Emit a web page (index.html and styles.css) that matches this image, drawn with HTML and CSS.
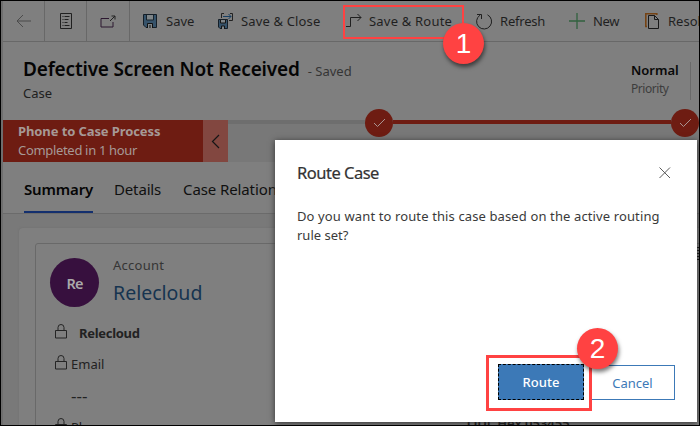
FILE: index.html
```html
<!DOCTYPE html>
<html lang="en">
<head>
<meta charset="utf-8">
<title>Defective Screen Not Received</title>
<link rel="stylesheet" href="styles.css">
</head>
<body>
<div class="app">
  <nav class="toolbar">
    <div class="tool back"><svg width="16" height="14"><path d="M7 1 1 7l6 6M1 7h14" stroke="#4b4b4b"/></svg></div>
    <div class="tool form"><svg width="12" height="16"><path d="M.5.500h11v15H.5zM2.500 3.500h1m1 0h5M2.500 6.500h1m1 0h4M2.500 9.500h1m1 0h3M2.500 12.500h1m1 0h5" stroke="#202020"/></svg></div>
    <div class="tool popout"><svg width="16" height="13"><path d="M9 3.500H1v8.500h12V7" stroke="#2d1830"/><path d="m10 6 5-5M11.500 1H15v3.500" stroke="#222"/></svg></div>
    <div class="command save"><svg width="15" height="15"><path d="M.5.500h13v13H3l-2.500-2.500z" fill="#36536b" stroke="#151f28"/><path d="M3.500 1v5h7V1" fill="#7f8588" stroke="#19242c"/><path d="M4.500 14V9.500h5V14M7 11v3" fill="#7f8588" stroke="#111"/></svg><span>Save</span></div>
    <div class="command save-close"><svg width="16" height="17"><path d="M3.500 5V.500H6M12 .500h2.500v7H11" stroke="#222"/><path d="M5 3.500h8M10.500 1 13 3.500 10.500 6" stroke="#173f63"/><path d="M.5 6.500h9v9H2L.5 14z" fill="#36536b" stroke="#151f28"/><path d="M2.500 7v3h5V7M3.500 16v-3h3v3" fill="#7f8588" stroke="#151515"/></svg><span>Save &amp; Close</span></div>
    <div class="command save-route"><svg width="17" height="14"><path d="M0 12.500h4.500v-9H15M11.500 0 15 3.500 11.500 7" stroke="#202020"/></svg><span>Save &amp; Route</span></div>
    <div class="command refresh"><svg width="17" height="17"><path d="M11.500 1.800A7.500 7.500 0 1 1 4 2.200M1 1.500h4.500V6" stroke="#202020"/></svg><span>Refresh</span></div>
    <div class="command new"><svg width="17" height="17"><path d="M8 0v16M0 8h16" stroke="#32623f" stroke-width="1.300"/></svg><span>New</span></div>
    <div class="command resolve"><svg width="15" height="17"><path d="M2 13.500H.800V.800h11V2" stroke="#754314" stroke-width="1.600"/><path d="M3.500 2.500h6l4 4v9h-10zM9.500 2.500v4h4" stroke="#191919"/></svg><span>Resol</span></div>
  </nav>
  <header class="record">
    <div class="heading">
      <div class="title-line"><h1>Defective Screen Not Received</h1><span class="saved">- Saved</span></div>
      <div class="entity">Case</div>
    </div>
    <div class="priority"><b>Normal</b><span>Priority</span></div>
  </header>
  <section class="process">
    <div class="process-name"><b>Phone to Case Process</b><span>Completed in 1 hour</span></div>
    <div class="collapse"><svg width="9" height="15"><path d="M8 1 1.500 7.500 8 14" stroke="#161616" stroke-width="1.200"/></svg></div>
    <div class="track">
      <i class="rail"></i>
      <span class="stage"><svg width="13" height="10"><path d="m1 5 3.500 3.500L12 1" stroke="#a99390"/></svg></span>
      <i class="rail done"></i>
      <span class="stage"><svg width="13" height="10"><path d="m1 5 3.500 3.500L12 1" stroke="#a99390"/></svg></span>
    </div>
  </section>
  <nav class="tabs"><b>Summary</b><span class="details">Details</span><span class="relations">Case Relationships</span></nav>
  <main class="content">
    <div class="card"><div class="panel">
      <div class="account">
        <div class="avatar">Re</div>
        <div class="account-name"><span>Account</span><a>Relecloud</a></div>
      </div>
      <div class="field name"><svg class="lock" width="12" height="15"><path d="M.5 6.500h11v7.500H.5zM3 6.500V3.500a3 3 0 0 1 6 0v3" stroke="#252525"/></svg><b>Relecloud</b></div>
      <div class="field email"><svg class="lock" width="12" height="15"><path d="M.5 6.500h11v7.500H.5zM3 6.500V3.500a3 3 0 0 1 6 0v3" stroke="#252525"/></svg><span>Email</span></div>
      <div class="empty">---</div>
      <div class="field"><svg class="lock" width="12" height="15"><path d="M.5 6.500h11v7.500H.5zM3 6.500V3.500a3 3 0 0 1 6 0v3" stroke="#252525"/></svg><span>Phone</span></div>
    </div></div>
  </main>
  <div class="underlay">QDL Hex 053455</div>
  <div class="grip"></div>
</div>
<div class="dialog">
  <div class="dialog-head"><h2>Route Case</h2><svg width="12" height="12"><path d="m.5.500 10.500 10.500M11 .500.500 11" stroke="#5a5a5a"/></svg></div>
  <p><span class="line-one">Do you want to route this case based on the active routing</span><br><span class="line-two">rule set?</span></p>
  <div class="actions"><button class="primary">Route</button><button class="cancel">Cancel</button></div>
</div>
<div class="highlight highlight-one"></div><div class="step step-one">1</div>
<div class="highlight highlight-two"></div><div class="step step-two">2</div>
<div class="frame"></div>
</body>
</html>
```
FILE: styles.css
```css
* { box-sizing: border-box; }
body { margin: 0; width: 700px; height: 426px; overflow: hidden; position: relative; font: 13px/18px "Noto Sans", "Open Sans", sans-serif; }
svg { fill: none; flex: none; overflow: visible; }
h1, h2, p { margin: 0; }
span, b, a, h1, h2 { white-space: nowrap; }
.app { width: 700px; height: 426px; overflow: hidden; background: #7f7f7f; border-left: 3px solid #6e6e6e; }
.toolbar { height: 42px; padding-top: 1px; display: flex; border-bottom: 1px solid #686868; color: #1f1f1f; }
.tool { flex: none; width: 42px; border-right: 1px solid #686868; display: flex; align-items: center; justify-content: center; }
.popout { width: 43px; }
.command { flex: none; display: flex; align-items: center; }
.save { margin-left: 13px; width: 75px; gap: 8px; }
.save-close { width: 128px; gap: 7px; letter-spacing: .15px; }
.save-route { width: 130px; gap: 6px; letter-spacing: .2px; }
.refresh { width: 93px; gap: 7px; letter-spacing: -.2px; }
.new { width: 76px; gap: 7px; letter-spacing: -.3px; }
.resolve { gap: 8px; }
.record { height: 78px; padding: 15px 9px 0 20px; display: flex; justify-content: space-between; }
.title-line { display: flex; align-items: baseline; gap: 8px; height: 28px; }
h1 { font-size: 19px; line-height: 25px; font-weight: 600; color: #050505; letter-spacing: -.17px; }
.saved { color: #353535; }
.entity { color: #202020; margin-top: -1px; }
.priority { height: 38px; width: 60px; margin-top: 5px; border-right: 1px solid #6a6a6a; color: #3d3d3d; display: flex; flex-direction: column; }
.priority b { color: #080808; font-weight: 600; line-height: 18px; margin-top: -1px; }
.priority span { font-size: 12px; letter-spacing: -.45px; margin-top: 1px; }
.process { height: 42px; display: flex; }
.process-name { width: 200px; background: #6e1c12; color: #a69996; padding: 2px 15px; display: flex; flex-direction: column; }
.process-name b { line-height: 19px; letter-spacing: -.1px; }
.process-name span { letter-spacing: -.32px; }
.collapse { width: 25px; background: #824740; display: flex; align-items: center; justify-content: center; }
.track { flex: 1; background: #787878; display: flex; align-items: flex-start; }
.rail { width: 137px; height: 4px; background: #6e6e6e; }
.rail.done { width: 278px; background: #6e1c12; }
.stage { width: 28px; height: 28px; margin-top: -11px; border-radius: 50%; background: #6e1c12; flex: none; display: flex; align-items: center; justify-content: center; }
.tabs { height: 52px; padding-left: 21px; display: flex; border-bottom: 1px solid #6b6b6b; color: #101010; font-size: 15px; line-height: 54px; }
.tabs b { color: #050505; font-weight: 600; width: 69px; height: 51px; border-bottom: 2px solid #132f6e; letter-spacing: -.15px; }
.details { margin-left: 21px; width: 48px; letter-spacing: -.15px; }
.relations { margin-left: 21px; letter-spacing: -.1px; }
.content { height: 211px; padding: 14px 0 0 16px; background: #797979; }
.card { height: 210px; border-radius: 4px 0 0; background: #7f7f7f; padding: 15px 0 0 16px; box-shadow: 0 0 2px #6e6e6e; }
.panel { height: 210px; border: 1px solid #696969; border-radius: 3px 0 0; padding: 14px 0 0 14px; }
.account { display: flex; gap: 14px; height: 66px; }
.avatar { width: 49px; height: 49px; border-radius: 50%; background: #37103e; color: #aaa; font-size: 14.5px; font-weight: 600; display: flex; align-items: center; justify-content: center; letter-spacing: -.8px; }
.account-name { display: flex; flex-direction: column; color: #353535; }
.account-name span { height: 20px; line-height: 15px; letter-spacing: .25px; }
.account-name a { font-size: 19.5px; line-height: 29px; color: #163450; }
.field { display: flex; height: 31px; color: #222; padding-left: 5px; gap: 4px; }
.field b { margin-left: 8px; letter-spacing: -.3px; }
.empty { height: 32px; padding: 1px 0 0 21px; color: #222; font-size: 17px; }
.underlay { position: absolute; left: 467px; top: 414px; color: #111; font-weight: 600; }
.grip { position: absolute; left: 697px; top: 247px; width: 2px; height: 13px; background: repeating-linear-gradient(#111 0 1px, #777 1px 3px); }
.dialog { position: absolute; left: 275px; top: 140px; width: 422px; height: 282px; padding: 21px 22px 22px; background: #fff; box-shadow: 0 1px 6px #333; display: flex; flex-direction: column; color: #333; }
.dialog-head { display: flex; justify-content: space-between; height: 46px; padding-right: 4px; }
.dialog-head svg { margin-top: 6px; }
h2 { font-size: 16.5px; line-height: 24px; font-weight: 400; letter-spacing: -.5px; -webkit-text-stroke: .2px #333; }
p { line-height: 19px; color: #3a3a3a; }
.line-one { letter-spacing: .12px; }
.actions { margin-top: auto; display: flex; justify-content: flex-end; gap: 6px; }
button { height: 36px; padding: 0; font: 13px "Noto Sans", sans-serif; }
.primary { width: 86px; background: #3c79b7; color: #fff; border: 1px dashed #000; font-weight: 500; }
.cancel { width: 85px; height: 35px; margin-top: 1px; background: #fff; color: #3c79b7; border: 1px solid #3c79b7; }
.highlight { position: absolute; border: 3px solid #ff4242; }
.highlight-one { left: 343px; top: 5px; width: 121px; height: 34px; border-width: 2px; }
.highlight-two { left: 486px; top: 355px; width: 106px; height: 56px; }
.step { position: absolute; width: 41px; height: 41px; border-radius: 50%; background: #ff4242; color: #fff; font: 28px/41px "Liberation Sans", sans-serif; text-align: center; box-shadow: 1px 3px 4px #0008; }
.step-one { left: 443px; top: 23px; }
.step-two { left: 577px; top: 328px; }
.frame { position: absolute; inset: 0; border: 1px solid #000; pointer-events: none; }
```
